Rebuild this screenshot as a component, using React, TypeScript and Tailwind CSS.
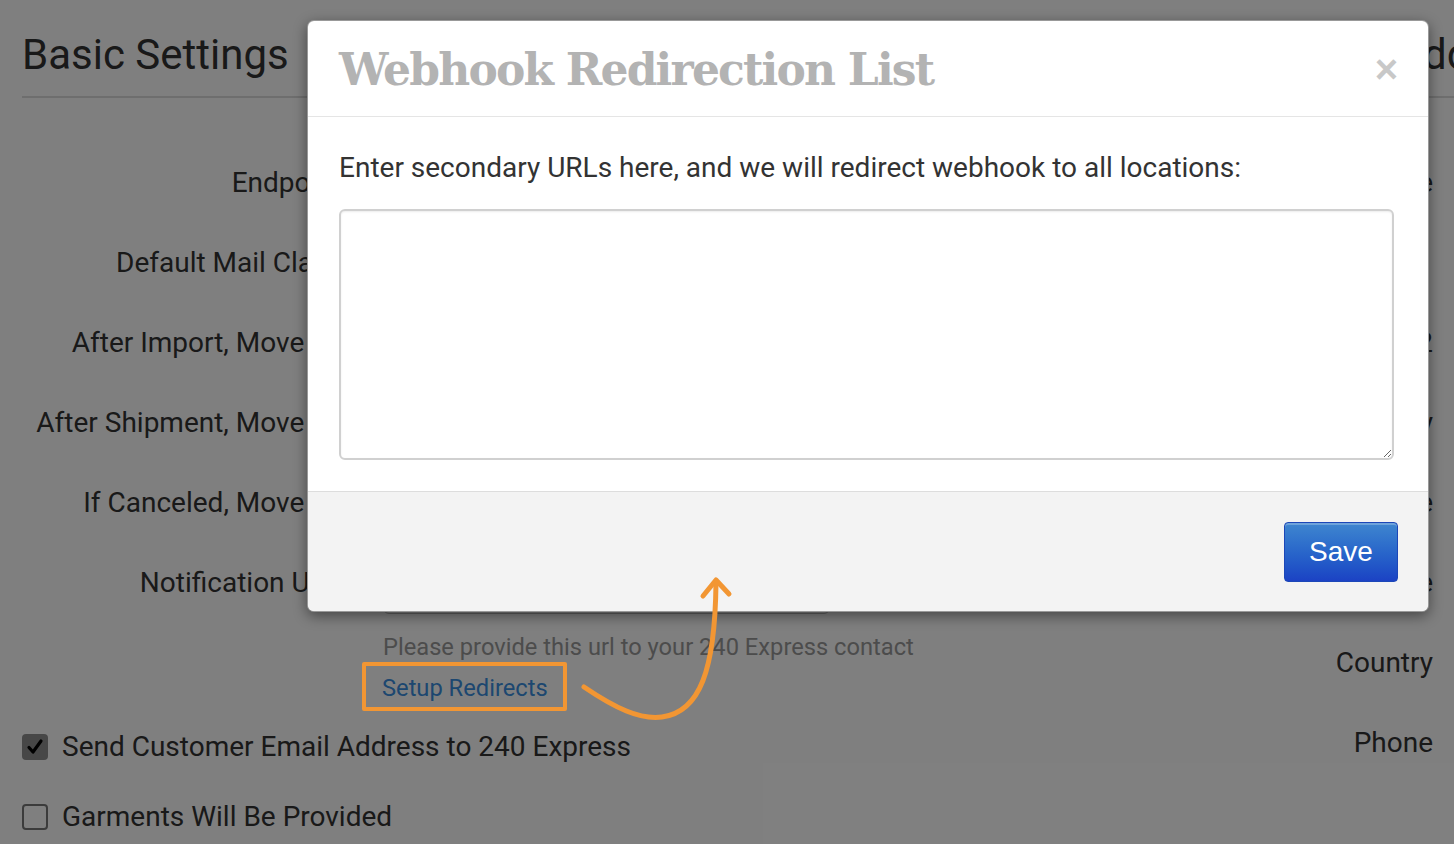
import React from 'react';

const leftRows = [
    'Endpoint',
    'Default Mail Class',
    'After Import, Move To',
    'After Shipment, Move To',
    'If Canceled, Move To',
    'Notification URL',
];

const rightRows = ['Name', 'Address 1', 'Address 2', 'City', 'State', 'Zip Code', 'Country', 'Phone'];

const Field: React.FC<{ label: string; wide?: boolean }> = ({ label, wide }) => (
    <div className="flex items-center h-[80px]">
        <div className={`${wide ? 'w-[320px] mr-[41px]' : 'w-[303px] mr-[38px]'} shrink-0 text-right text-[28px] text-[#333] whitespace-nowrap`}>{label}</div>
        <div className="w-[447px] h-[62px] shrink-0 rounded-[6px] border border-[#bbb] bg-white" />
    </div>
);

const App: React.FC = () => {
    return (
        <div className="relative w-[1454px] h-[844px] overflow-hidden bg-white" style={{ fontFamily: 'Roboto, "Liberation Sans", sans-serif' }}>
            {/* page behind the dialog */}
            <div className="flex pl-[22px]">
                <div className="w-[1068px] shrink-0">
                    <div className="pt-[31px] pb-[17px] border-b-2 border-[#ddd]">
                        <h1 className="text-[42px] leading-[48px] text-[#333]">Basic Settings</h1>
                    </div>
                    <div className="mt-[45px]">
                        {leftRows.map((r) => (
                            <Field key={r} label={r} wide />
                        ))}
                    </div>
                    <div className="pl-[361px] pt-[8px]">
                        <p className="text-[23.7px] leading-[32px] text-[#999] whitespace-nowrap">Please provide this url to your 240 Express contact</p>
                        <a className="block mt-[9px] text-[23.7px] leading-[32px] text-[#3b8fe0] -ml-px">Setup Redirects</a>
                    </div>
                    <div className="mt-[8px]">
                        <label className="flex items-center h-[70px] gap-[14px]">
                            <span className="w-[26px] h-[26px] rounded-[4px] bg-[#8f8f8f] flex items-center justify-center">
                                <svg width="18" height="18" viewBox="0 0 18 18" fill="none">
                                    <path d="M3 9.5 L7 14 L15 3" stroke="#000" strokeWidth="3.2" strokeLinecap="round" strokeLinejoin="round" />
                                </svg>
                            </span>
                            <span className="text-[28px] text-[#333] whitespace-nowrap">Send Customer Email Address to 240 Express</span>
                        </label>
                        <label className="flex items-center h-[70px] gap-[14px]">
                            <span className="w-[26px] h-[26px] rounded-[4px] border-2 border-[#777] bg-white" />
                            <span className="text-[28px] text-[#333] whitespace-nowrap">Garments Will Be Provided</span>
                        </label>
                    </div>
                </div>

                <div className="ml-[40px] w-[700px] shrink-0">
                    <div className="pt-[31px] pb-[17px] border-b-2 border-[#ddd]">
                        <h2 className="-ml-[12px] text-[42px] leading-[48px] text-[#333] whitespace-nowrap">Default Return Address</h2>
                    </div>
                    <div className="mt-[45px]">
                        {rightRows.map((r) => (
                            <Field key={r} label={r} />
                        ))}
                    </div>
                </div>
            </div>

            {/* backdrop */}
            <div className="absolute inset-0 bg-black/50" />

            {/* dialog */}
            <div className="absolute left-[307px] top-[20px] w-[1122px] h-[592px] rounded-[7px] border border-black/40 bg-white shadow-[0_4px_14px_rgba(0,0,0,0.45)] overflow-hidden flex flex-col">
                <div className="h-[96px] shrink-0 flex items-center justify-between pl-[31px] pr-[30px] border-b border-[#e5e5e5]">
                    <h3
                        className="text-[44px] font-bold text-[#b3b3b3] tracking-[-1.8px] leading-none pt-[3px]"
                        style={{ fontFamily: '"DejaVu Serif", "Liberation Serif", serif' }}
                    >
                        Webhook Redirection List
                    </h3>
                    <span className="text-[40px] font-bold text-[#c8c8c8] leading-none" style={{ fontFamily: '"Liberation Sans", Arial, sans-serif' }}>×</span>
                </div>
                <div className="pt-[33px] pl-[31px] pr-[34px] pb-[31px] border-b border-[#ddd]">
                    <p className="text-[28px] leading-[36px] text-[#333] whitespace-nowrap">
                        Enter secondary URLs here, and we will redirect webhook to all locations:
                    </p>
                    <textarea className="mt-[23px] block w-full h-[251px] rounded-[6px] border-2 border-[#d0d0d0] bg-white shadow-[inset_0_1px_2px_rgba(0,0,0,0.08)] outline-none" />
                </div>
                <div className="flex-1 bg-[#f3f3f3] flex items-center justify-end pr-[30px]">
                    <button
                        className="w-[114px] h-[60px] rounded-[4px] border border-[#1c47b8] bg-gradient-to-b from-[#3f86cf] to-[#1c42c4] text-white text-[28px] shadow-[inset_0_2px_0_rgba(255,255,255,0.25)]"
                        style={{ fontFamily: '"Liberation Sans", Arial, sans-serif' }}
                    >
                        Save
                    </button>
                </div>
            </div>

            {/* annotation */}
            <div className="absolute left-[362px] top-[662px] w-[205px] h-[49px] border-[4px] border-[#f29633] rounded-[2px]" />
            <svg className="absolute inset-0 pointer-events-none" width="1454" height="844" viewBox="0 0 1454 844" fill="none">
                <path
                    d="M584 687 C 615 708, 640 720, 662 717 C 700 712, 715 670, 716 583"
                    stroke="#f29633"
                    strokeWidth="5"
                    strokeLinecap="round"
                />
                <path d="M703 596 L716 580 L729 594" stroke="#f29633" strokeWidth="5" strokeLinecap="round" strokeLinejoin="round" />
            </svg>
        </div>
    );
};

export default App;
